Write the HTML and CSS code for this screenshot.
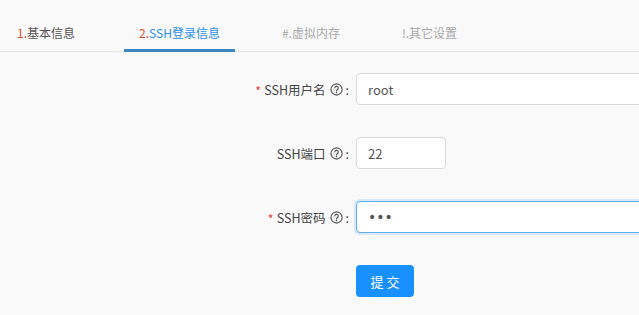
FILE: index.html
```html
<!DOCTYPE html>
<html lang="zh">
<head>
<meta charset="utf-8">
<link rel="stylesheet" href="styles.css">
</head>
<body>
<div class="tabs">
  <div class="tab"><span class="num">1.</span>基本信息</div>
  <div class="tab active"><span class="num">2.</span>SSH登录信息</div>
  <div class="tab disabled">#.虚拟内存</div>
  <div class="tab disabled">!.其它设置</div>
</div>
<form class="form">
  <div class="row">
    <label class="label"><span class="req">*</span>SSH用户名<svg class="q" viewBox="0 0 14 14"><circle cx="7" cy="7" r="6" fill="none" stroke="currentColor" stroke-width="1.2"/><path d="M5.1 5.6a1.9 1.9 0 1 1 2.7 1.7c-.5.3-.8.6-.8 1.2v.6" fill="none" stroke="currentColor" stroke-width="1.3"/><circle cx="7" cy="10.4" r=".8" fill="currentColor"/></svg><span class="colon">:</span></label>
    <input class="input wide" type="text" value="root">
  </div>
  <div class="row">
    <label class="label">SSH端口<svg class="q" viewBox="0 0 14 14"><circle cx="7" cy="7" r="6" fill="none" stroke="currentColor" stroke-width="1.2"/><path d="M5.1 5.6a1.9 1.9 0 1 1 2.7 1.7c-.5.3-.8.6-.8 1.2v.6" fill="none" stroke="currentColor" stroke-width="1.3"/><circle cx="7" cy="10.4" r=".8" fill="currentColor"/></svg><span class="colon">:</span></label>
    <input class="input short" type="text" value="22">
  </div>
  <div class="row">
    <label class="label"><span class="req">*</span>SSH密码<svg class="q" viewBox="0 0 14 14"><circle cx="7" cy="7" r="6" fill="none" stroke="currentColor" stroke-width="1.2"/><path d="M5.1 5.6a1.9 1.9 0 1 1 2.7 1.7c-.5.3-.8.6-.8 1.2v.6" fill="none" stroke="currentColor" stroke-width="1.3"/><circle cx="7" cy="10.4" r=".8" fill="currentColor"/></svg><span class="colon">:</span></label>
    <input class="input wide focused" type="password" value="abc">
  </div>
  <div class="row">
    <span class="label"></span>
    <button class="btn" type="button">提 交</button>
  </div>
</form>
</body>
</html>
```

FILE: styles.css
```css
html, body {
  margin: 0;
  padding: 0;
  overflow: hidden;
  background: #f9f9f9;
  font-family: "Noto Sans CJK SC", "Noto Sans", sans-serif;
  font-size: 12px;
  color: #555;
}
.tabs {
  display: flex;
  gap: 32px;
  margin-top: 11px;
  border-bottom: 1px solid #e6e6e6;
}
.tab {
  padding: 12px 17px 8px;
  line-height: 20px;
  font-size: 12px;
  color: #555;
  position: relative;
  white-space: nowrap;
}
.tab .num { color: #d4542a; }
.tab.active { color: #2d8fe6; padding: 12px 15px 8px; }
.tab.active::after {
  content: "";
  position: absolute;
  left: 0;
  right: 0;
  bottom: -1px;
  height: 3px;
  background: #3e86bd;
}
.tab.disabled { color: #aaa; padding: 12px 15px 8px; }
.form {
  display: flex;
  flex-direction: column;
  gap: 32px;
  padding-top: 21px;
}
.row {
  display: flex;
  align-items: center;
  height: 32px;
}
.label {
  width: 356px;
  flex: none;
  display: flex;
  align-items: center;
  justify-content: flex-end;
  color: #444;
  font-size: 12.5px;
  white-space: nowrap;
}
.req {
  color: #e0443e;
  margin-right: 3px;
  position: relative;
  top: 1px;
}
.q {
  width: 13px;
  height: 13px;
  margin-left: 4px;
  color: #555;
}
.colon {
  margin: 0 7px 0 3px;
}
.input {
  box-sizing: border-box;
  height: 32px;
  border: 1px solid #d9d9d9;
  border-radius: 4px;
  background: #fff;
  padding: 0 11px;
  font-family: inherit;
  font-size: 13px;
  color: #555;
  outline: none;
  flex: none;
}
.input.wide { width: 420px; }
.input.short { width: 90px; }
.input.focused {
  border-color: #5aaef0;
  box-shadow: 0 0 0 2px rgba(24, 144, 255, 0.15);
  font-family: "DejaVu Sans", sans-serif;
  font-size: 14px;
  color: #555;
}
.btn {
  box-sizing: border-box;
  width: 58px;
  height: 32px;
  border: none;
  border-radius: 4px;
  background: #1890ff;
  color: #fff;
  font-family: inherit;
  font-size: 13px;
  padding: 0;
}
```
